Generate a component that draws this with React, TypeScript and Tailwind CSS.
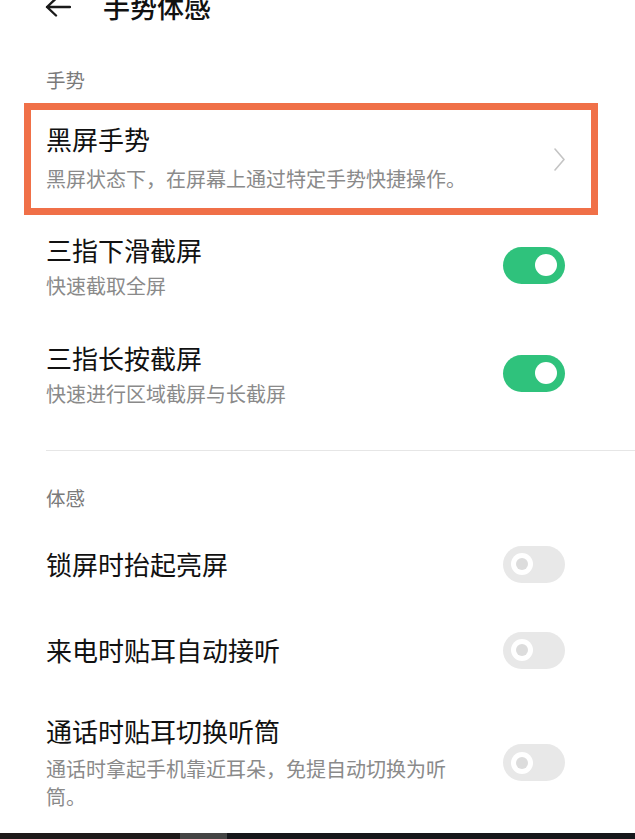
import React from 'react';

const font = { fontFamily: '"Noto Sans CJK SC", "Noto Sans", sans-serif' };

function Toggle({ on }: { on: boolean }) {
  if (on) {
    return (
      <div className="w-[62px] h-[37px] rounded-full bg-[#2fc27c] flex items-center justify-end pr-[8px] shrink-0">
        <span className="w-[22px] h-[22px] rounded-full bg-white" />
      </div>
    );
  }
  return (
    <div className="w-[62px] h-[37px] rounded-full bg-[#e8e8e8] flex items-center pl-[8px] shrink-0">
      <span className="w-[22px] h-[22px] rounded-full bg-white flex items-center justify-center">
        <span className="w-[12px] h-[12px] rounded-full bg-[#dcdcdc]" />
      </span>
    </div>
  );
}

function SectionLabel({ text }: { text: string }) {
  return <div className="text-[19.5px] leading-[36px] text-[#7a7a7a]">{text}</div>;
}

export default function App() {
  return (
    <div className="w-[635px] h-[839px] bg-white overflow-hidden flex flex-col" style={font}>
      {/* header, cropped at the top */}
      <div className="-mt-[20px] h-[54px] flex items-center pl-[45px]">
        <svg width="26" height="20" viewBox="0 0 26 20" fill="none" stroke="#1a1a1a" strokeWidth="2.4" strokeLinecap="round" strokeLinejoin="round">
          <path d="M25 10H2M11 1.5L2 10l9 8.5" />
        </svg>
        <span className="ml-[32px] text-[27px] font-medium text-[#111]">手势体感</span>
      </div>

      <div className="mt-[28px] mb-[5px] pl-[46px]">
        <SectionLabel text="手势" />
      </div>

      {/* highlighted row */}
      <div className="mx-[24px] w-[574px] border-[7px] border-[#f07048] flex items-center pl-[15px] pr-[26px]">
        <div className="flex-1 pt-[12px] pb-[15px]">
          <div className="text-[26px] leading-[34px] text-[#111]">黑屏手势</div>
          <div className="mt-[9px] text-[20px] leading-[28px] text-[#8a8a8a]">黑屏状态下，在屏幕上通过特定手势快捷操作。</div>
        </div>
        <svg width="11" height="23" viewBox="0 0 11 23" fill="none" stroke="#c4c4c4" strokeWidth="1.6" strokeLinecap="round" strokeLinejoin="round">
          <path d="M1 1l9 10.5L1 22" />
        </svg>
      </div>

      {[
        { title: '三指下滑截屏', sub: '快速截取全屏' },
        { title: '三指长按截屏', sub: '快速进行区域截屏与长截屏' },
      ].map(r => (
        <div key={r.title} className="h-[108px] flex items-center pl-[46px] pr-[70px] pb-[6px]">
          <div className="flex-1 flex items-start">
            <div className="flex-1">
              <div className="text-[26px] leading-[34px] text-[#111]">{r.title}</div>
              <div className="mt-[5px] text-[20px] leading-[28px] text-[#8a8a8a]">{r.sub}</div>
            </div>
            <div className="mt-[14px]">
              <Toggle on />
            </div>
          </div>
        </div>
      ))}

      <div className="mt-[19px] ml-[46px] h-px bg-[#e6e6e6]" />

      <div className="mt-[29px] pl-[46px]">
        <SectionLabel text="体感" />
      </div>

      <div className="mt-[5px] flex flex-col">
        {['锁屏时抬起亮屏', '来电时贴耳自动接听'].map(t => (
          <div key={t} className="h-[86px] flex items-center pl-[46px] pr-[70px]">
            <div className="flex-1 text-[26px] leading-[34px] text-[#111]">{t}</div>
            <Toggle on={false} />
          </div>
        ))}

        <div className="pt-[21px] flex items-center pl-[46px] pr-[70px]">
          <div className="flex-1">
            <div className="text-[26px] leading-[34px] text-[#111]">通话时贴耳切换听筒</div>
            <div className="mt-[7px] max-w-[410px] text-[20px] leading-[28px] text-[#8a8a8a]">
              通话时拿起手机靠近耳朵，免提自动切换为听筒。
            </div>
          </div>
          <Toggle on={false} />
        </div>
      </div>

      {/* bottom edge of the screenshot */}
      <div className="mt-auto h-[6px] flex">
        <div className="w-[180px] bg-[#1e1a1a]" />
        <div className="w-[47px] bg-[#444]" />
        <div className="flex-1 bg-[#16171b]" />
      </div>
    </div>
  );
}
